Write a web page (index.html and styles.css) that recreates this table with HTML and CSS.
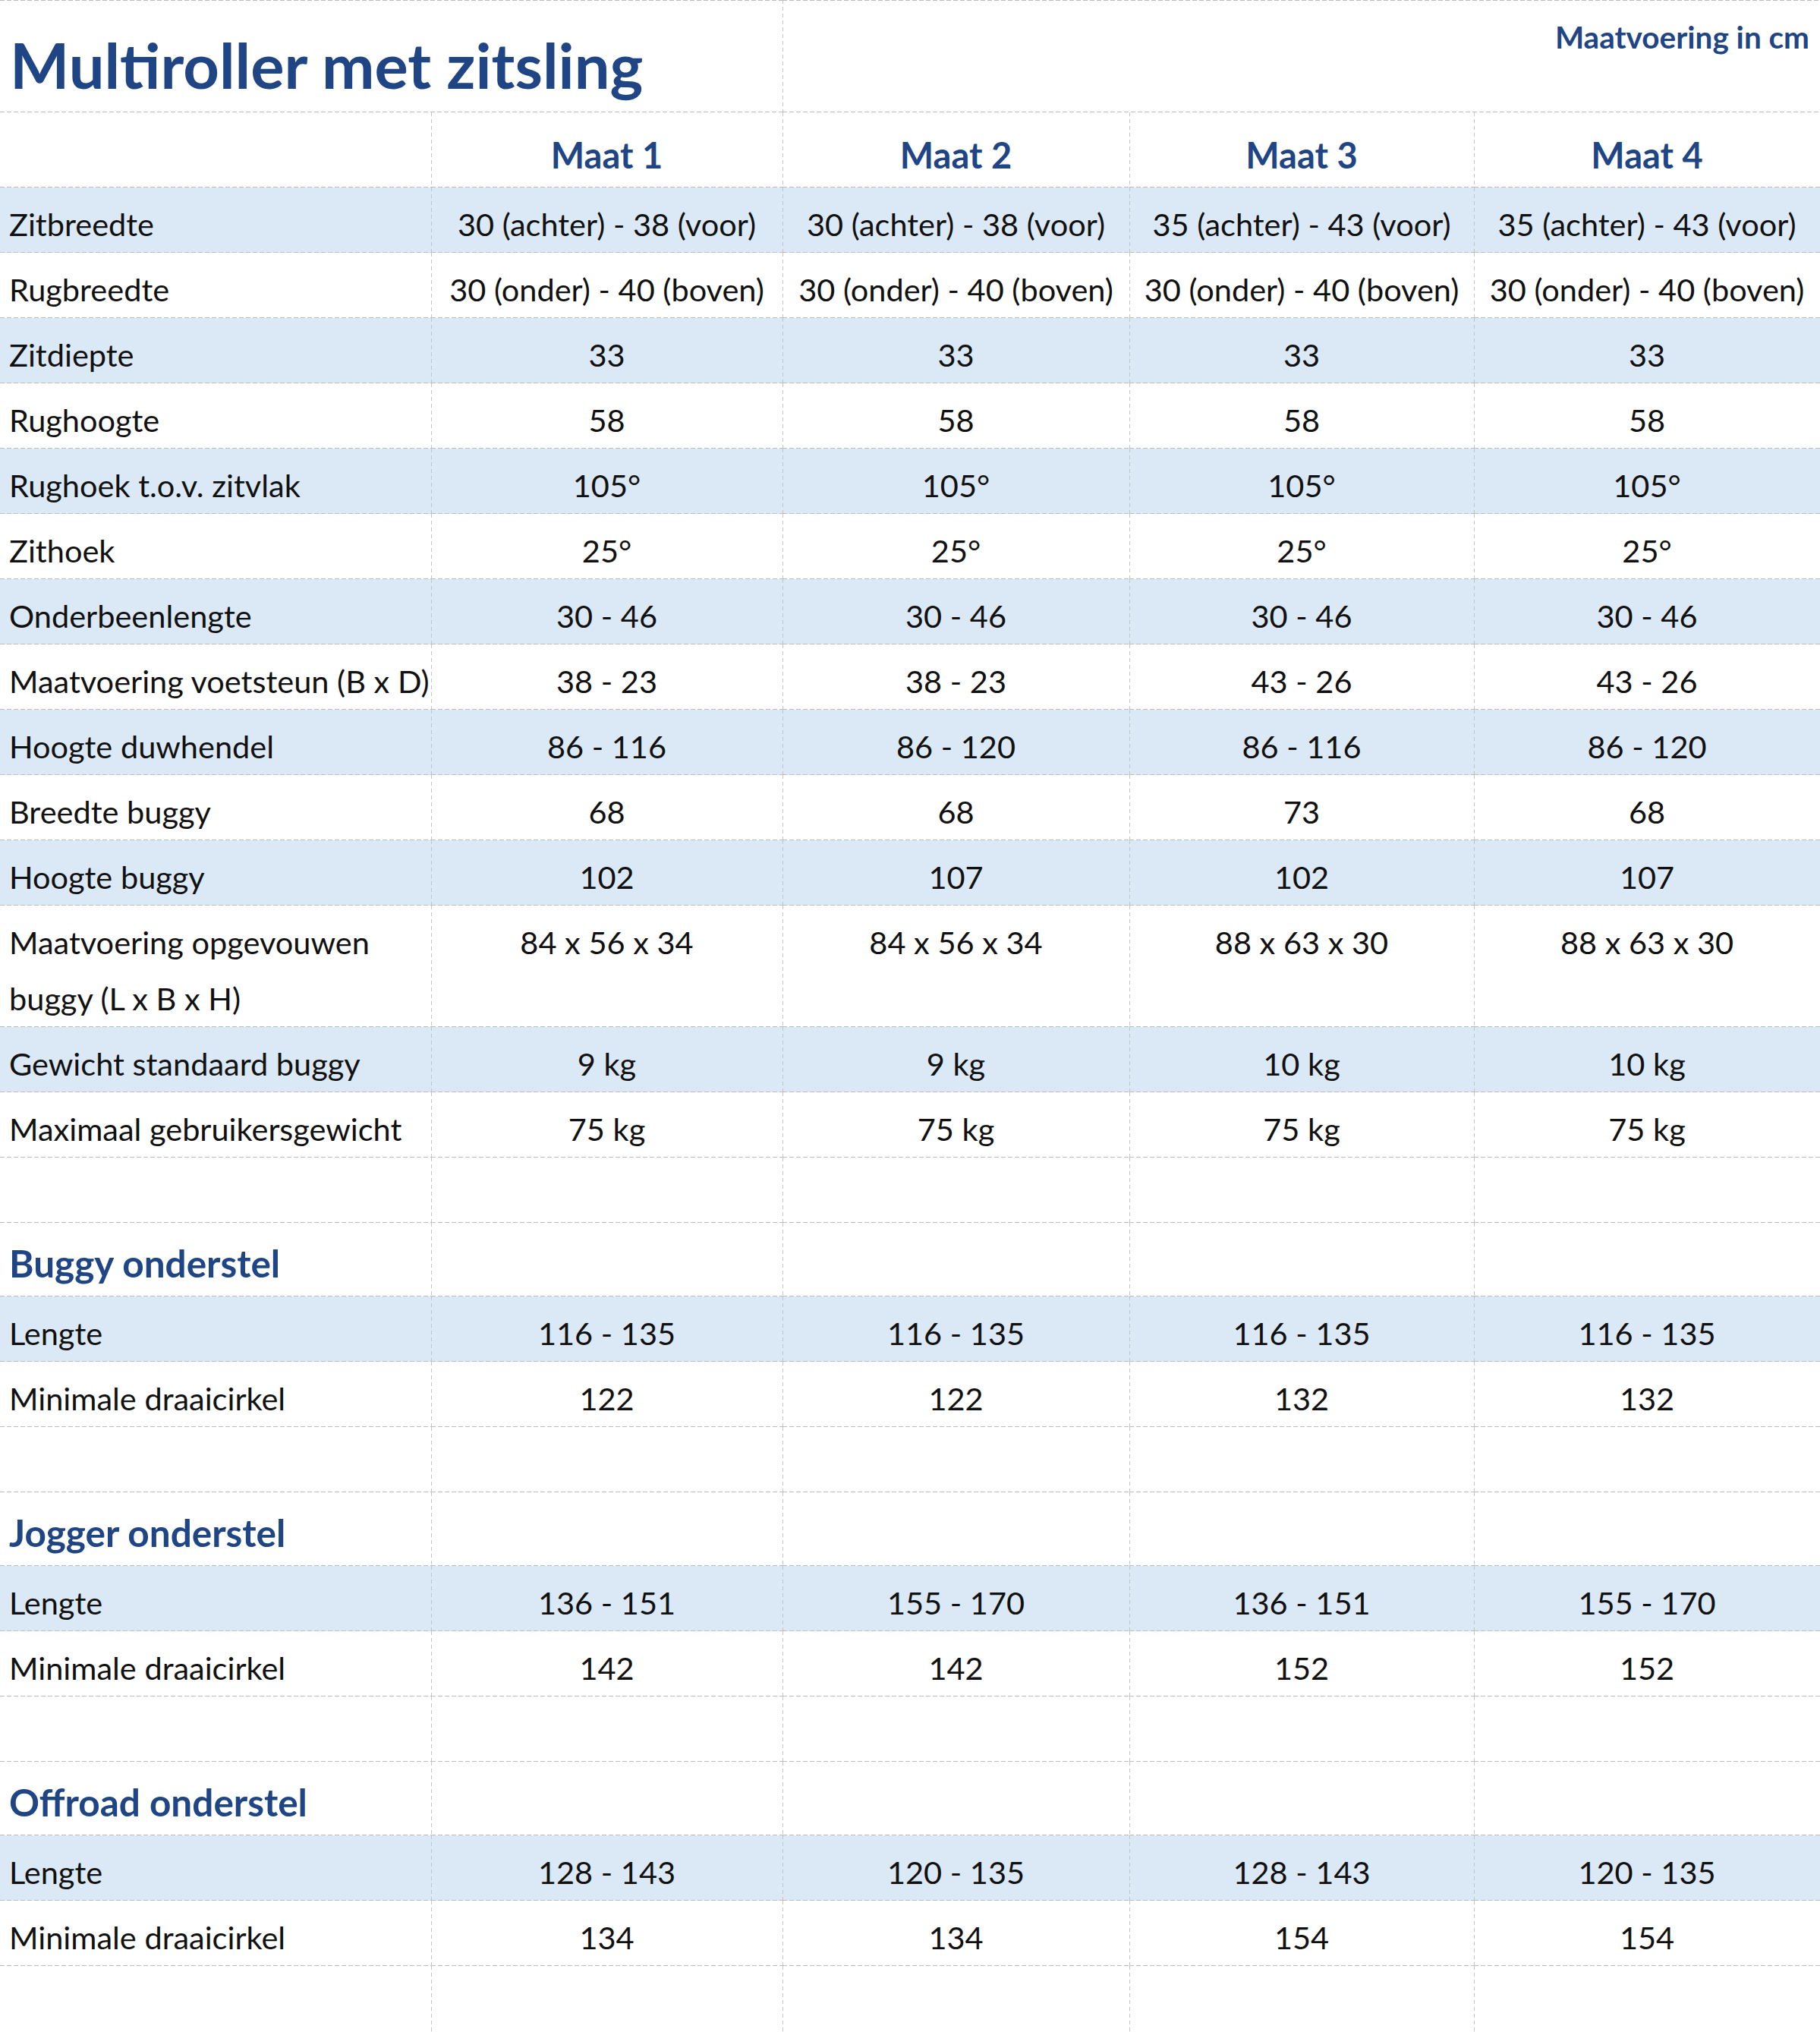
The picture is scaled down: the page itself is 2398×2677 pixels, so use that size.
FILE: index.html
```html
<!DOCTYPE html>
<html lang="nl">
<head>
<meta charset="utf-8">
<title>Multiroller met zitsling – maatvoering</title>
<link rel="stylesheet" href="styles.css">
</head>
<body>
<table class="spec">
  <colgroup>
    <col class="c-label">
    <col class="c-1">
    <col class="c-2">
    <col class="c-3">
    <col class="c-4">
  </colgroup>
  <tbody>
    <tr class="top">
      <td class="title" colspan="2">Multiroller met zitsling</td>
      <td class="unit" colspan="3">Maatvoering in cm</td>
    </tr>
    <tr class="heads">
      <td class="label"></td>
      <td class="head">Maat 1</td>
      <td class="head">Maat 2</td>
      <td class="head">Maat 3</td>
      <td class="head">Maat 4</td>
    </tr>
    <tr class="alt"><td class="label">Zitbreedte</td><td>30 (achter) - 38 (voor)</td><td>30 (achter) - 38 (voor)</td><td>35 (achter) - 43 (voor)</td><td>35 (achter) - 43 (voor)</td></tr>
    <tr><td class="label">Rugbreedte</td><td>30 (onder) - 40 (boven)</td><td>30 (onder) - 40 (boven)</td><td>30 (onder) - 40 (boven)</td><td>30 (onder) - 40 (boven)</td></tr>
    <tr class="alt"><td class="label">Zitdiepte</td><td>33</td><td>33</td><td>33</td><td>33</td></tr>
    <tr><td class="label">Rughoogte</td><td>58</td><td>58</td><td>58</td><td>58</td></tr>
    <tr class="alt"><td class="label">Rughoek t.o.v. zitvlak</td><td>105°</td><td>105°</td><td>105°</td><td>105°</td></tr>
    <tr><td class="label">Zithoek</td><td>25°</td><td>25°</td><td>25°</td><td>25°</td></tr>
    <tr class="alt"><td class="label">Onderbeenlengte</td><td>30 - 46</td><td>30 - 46</td><td>30 - 46</td><td>30 - 46</td></tr>
    <tr><td class="label">Maatvoering voetsteun (B x D)</td><td>38 - 23</td><td>38 - 23</td><td>43 - 26</td><td>43 - 26</td></tr>
    <tr class="alt"><td class="label">Hoogte duwhendel</td><td>86 - 116</td><td>86 - 120</td><td>86 - 116</td><td>86 - 120</td></tr>
    <tr><td class="label">Breedte buggy</td><td>68</td><td>68</td><td>73</td><td>68</td></tr>
    <tr class="alt"><td class="label">Hoogte buggy</td><td>102</td><td>107</td><td>102</td><td>107</td></tr>
    <tr><td class="label">Maatvoering opgevouwen<br>buggy (L x B x H)</td><td>84 x 56 x 34</td><td>84 x 56 x 34</td><td>88 x 63 x 30</td><td>88 x 63 x 30</td></tr>
    <tr class="alt"><td class="label">Gewicht standaard buggy</td><td>9 kg</td><td>9 kg</td><td>10 kg</td><td>10 kg</td></tr>
    <tr><td class="label">Maximaal gebruikersgewicht</td><td>75 kg</td><td>75 kg</td><td>75 kg</td><td>75 kg</td></tr>
    <tr><td class="label">&nbsp;</td><td></td><td></td><td></td><td></td></tr>

    <tr class="sect"><td class="label section">Buggy onderstel</td><td></td><td></td><td></td><td></td></tr>
    <tr class="alt"><td class="label">Lengte</td><td>116 - 135</td><td>116 - 135</td><td>116 - 135</td><td>116 - 135</td></tr>
    <tr><td class="label">Minimale draaicirkel</td><td>122</td><td>122</td><td>132</td><td>132</td></tr>
    <tr><td class="label">&nbsp;</td><td></td><td></td><td></td><td></td></tr>

    <tr class="sect"><td class="label section">Jogger onderstel</td><td></td><td></td><td></td><td></td></tr>
    <tr class="alt"><td class="label">Lengte</td><td>136 - 151</td><td>155 - 170</td><td>136 - 151</td><td>155 - 170</td></tr>
    <tr><td class="label">Minimale draaicirkel</td><td>142</td><td>142</td><td>152</td><td>152</td></tr>
    <tr><td class="label">&nbsp;</td><td></td><td></td><td></td><td></td></tr>

    <tr class="sect"><td class="label section">Offroad onderstel</td><td></td><td></td><td></td><td></td></tr>
    <tr class="alt"><td class="label">Lengte</td><td>128 - 143</td><td>120 - 135</td><td>128 - 143</td><td>120 - 135</td></tr>
    <tr><td class="label">Minimale draaicirkel</td><td>134</td><td>134</td><td>154</td><td>154</td></tr>
    <tr class="tail"><td class="label">&nbsp;</td><td></td><td></td><td></td><td></td></tr>
  </tbody>
</table>
</body>
</html>
```

FILE: styles.css
```css
html, body {
  margin: 0;
  padding: 0;
  background: #ffffff;
}

body {
  font-family: Lato, "Liberation Sans", sans-serif;
  color: #111111;
}

.spec {
  width: 2398px;
  table-layout: fixed;
  border-collapse: separate;
  border-spacing: 0;
}

.c-label { width: 568px; }
.c-1 { width: 463px; }
.c-2 { width: 457px; }
.c-3 { width: 454px; }
.c-4 { width: 456px; }

/* dashed rules drawn as backgrounds: bottom rule on every cell, left rule on all but the first */
.spec td {
  padding: 11px 12px 1px;
  font-size: 41.5px;
  line-height: 74px;
  vertical-align: top;
  text-align: center;
  white-space: nowrap;
  background-image: linear-gradient(to right, #bcbcbc 6px, transparent 6px);
  background-size: 9px 1px;
  background-repeat: repeat-x;
  background-position: left bottom;
}

.spec td + td {
  background-image:
    linear-gradient(to right, #bcbcbc 6px, transparent 6px),
    linear-gradient(to bottom, #c4c4c4 5px, transparent 5px);
  background-size: 9px 1px, 1px 9px;
  background-repeat: repeat-x, repeat-y;
  background-position: left bottom, left top;
}

.spec tr.alt td {
  background-color: #dbe8f5;
}

.spec td.label {
  text-align: left;
  padding-left: 12px;
}

/* title row */
.spec tr.top td {
  background-image:
    linear-gradient(to right, #bcbcbc 6px, transparent 6px),
    linear-gradient(to right, #bcbcbc 6px, transparent 6px);
  background-size: 9px 1px, 9px 1px;
  background-repeat: repeat-x, repeat-x;
  background-position: left bottom, left top;
  color: #1f4585;
  font-weight: 700;
}

.spec tr.top td + td {
  background-image:
    linear-gradient(to right, #bcbcbc 6px, transparent 6px),
    linear-gradient(to right, #bcbcbc 6px, transparent 6px),
    linear-gradient(to bottom, #c4c4c4 5px, transparent 5px);
  background-size: 9px 1px, 9px 1px, 1px 9px;
  background-repeat: repeat-x, repeat-x, repeat-y;
  background-position: left bottom, left top, left top;
}

.spec td.title {
  font-size: 83px;
  line-height: 100px;
  padding: 35px 12px 13px 13px;
  text-align: left;
}

.spec td.unit {
  font-size: 40.5px;
  line-height: 74px;
  padding: 12px 14px 0 12px;
  text-align: right;
}

/* column heads */
.spec td.head {
  color: #1f4585;
  font-weight: 700;
  font-size: 47px;
  line-height: 84px;
  padding-top: 14px;
}

/* section headings */
.spec tr.sect td {
  line-height: 85px;
  padding-top: 11px;
}

.spec td.section {
  color: #1f4585;
  font-weight: 700;
  font-size: 49.5px;
}

/* last row: no bottom rule */
.spec tr.tail td {
  background-image: none;
}

.spec tr.tail td + td {
  background-image: linear-gradient(to bottom, #c4c4c4 5px, transparent 5px);
  background-size: 1px 9px;
  background-repeat: repeat-y;
  background-position: left top;
}
```
